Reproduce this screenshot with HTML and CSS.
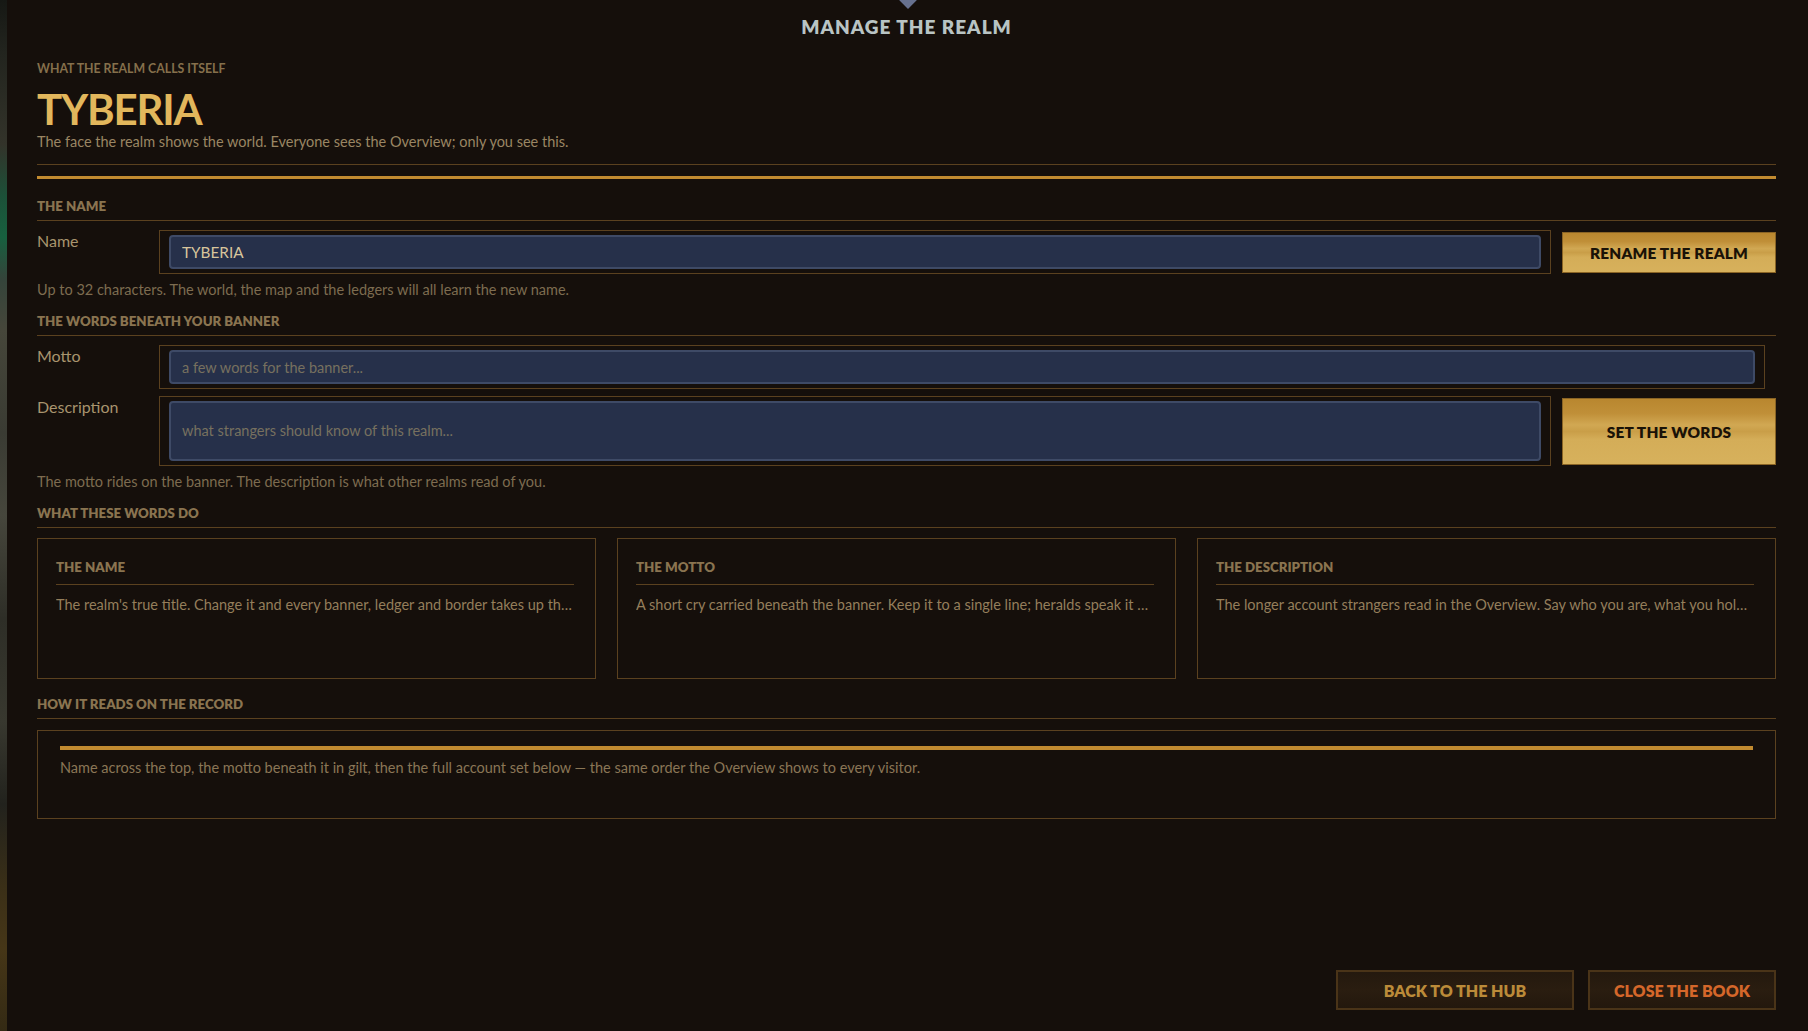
FILE: index.html
```html
<!DOCTYPE html>
<html lang="en">
<head>
<meta charset="utf-8">
<title>Manage the Realm</title>
<link rel="stylesheet" href="styles.css">
</head>
<body>
<div class="backdrop">
  <main class="panel">
    <span class="crest" aria-hidden="true"></span>
    <h1 class="panel-title">MANAGE THE REALM</h1>

    <header class="identity">
      <p class="eyebrow">WHAT THE REALM CALLS ITSELF</p>
      <h2 class="realm-name">TYBERIA</h2>
      <p class="lead">The face the realm shows the world. Everyone sees the Overview; only you see this.</p>
    </header>
    <div class="rule-thin"></div>
    <div class="rule-gilt"></div>

    <section class="block block-name">
      <h3 class="section-head">THE NAME</h3>
      <div class="form-row">
        <label class="field-label" for="realm-name">Name</label>
        <div class="field-frame">
          <input class="field-input" id="realm-name" type="text" value="TYBERIA">
        </div>
        <button class="btn-gilt" type="button">RENAME THE REALM</button>
      </div>
      <p class="hint">Up to 32 characters. The world, the map and the ledgers will all learn the new name.</p>
    </section>

    <section class="block">
      <h3 class="section-head">THE WORDS BENEATH YOUR BANNER</h3>
      <div class="form-row">
        <label class="field-label" for="realm-motto">Motto</label>
        <div class="field-frame field-frame-wide">
          <input class="field-input" id="realm-motto" type="text" placeholder="a few words for the banner...">
        </div>
      </div>
      <div class="form-row form-row-tall">
        <label class="field-label" for="realm-desc">Description</label>
        <div class="field-frame">
          <textarea class="field-input field-area" id="realm-desc" rows="1" placeholder="what strangers should know of this realm..."></textarea>
        </div>
        <button class="btn-gilt" type="button">SET THE WORDS</button>
      </div>
      <p class="hint">The motto rides on the banner. The description is what other realms read of you.</p>
    </section>

    <section class="block">
      <h3 class="section-head">WHAT THESE WORDS DO</h3>
      <div class="cards">
        <article class="card">
          <h4 class="card-head">THE NAME</h4>
          <p class="card-text">The realm's true title. Change it and every banner, ledger and border takes up the new name at once.</p>
        </article>
        <article class="card">
          <h4 class="card-head">THE MOTTO</h4>
          <p class="card-text">A short cry carried beneath the banner. Keep it to a single line; heralds speak it aloud.</p>
        </article>
        <article class="card">
          <h4 class="card-head">THE DESCRIPTION</h4>
          <p class="card-text">The longer account strangers read in the Overview. Say who you are, what you hold, and what you want.</p>
        </article>
      </div>
    </section>

    <section class="block">
      <h3 class="section-head">HOW IT READS ON THE RECORD</h3>
      <div class="record">
        <div class="record-bar"></div>
        <p class="record-text">Name across the top, the motto beneath it in gilt, then the full account set below — the same order the Overview shows to every visitor.</p>
      </div>
    </section>

    <footer class="actions">
      <button class="btn-dark btn-hub" type="button">BACK TO THE HUB</button>
      <button class="btn-dark btn-close" type="button">CLOSE THE BOOK</button>
    </footer>
  </main>
</div>
</body>
</html>
```

FILE: styles.css
```css
* { box-sizing: border-box; }

html, body {
  margin: 0;
  height: 100%;
}

body {
  font-family: "Lato", "Noto Sans", sans-serif;
  background: #140e0a;
  color: #9a8560;
  overflow: hidden;
}

.backdrop {
  height: 100vh;
  background:
    linear-gradient(180deg,
      #161814 0%, #22241e 5%, #33332a 14%,
      #1c5038 19%, #17603f 23%, #34443a 27%,
      #46463a 32%, #3a3b33 42%, #46463c 50%,
      #2e2e27 60%, #38382f 70%, #22221d 78%,
      #3a2f17 86%, #463617 92%, #342a14 100%);
  padding-left: 7px;
}

.panel {
  position: relative;
  height: 100%;
  background: #150f0b;
  padding: 0 32px 21px 30px;
  display: flex;
  flex-direction: column;
}

.crest {
  position: absolute;
  top: -8px;
  left: 50%;
  width: 14px;
  height: 14px;
  margin-left: -7px;
  background: #67718f;
  transform: rotate(45deg);
}

.panel-title {
  margin: 15px 0 0;
  text-align: center;
  font-size: 19px;
  line-height: 24px;
  font-weight: 800;
  letter-spacing: 1px;
  color: #b9c4c4;
}

.identity {
  margin-top: 22px;
}

.eyebrow {
  margin: 0;
  font-size: 12.3px;
  line-height: 16px;
  font-weight: 700;
  color: #85704c;
}

.realm-name {
  margin: 10px 0 0;
  font-size: 42px;
  line-height: 44px;
  font-weight: 700;
  letter-spacing: -1.2px;
  color: #e2b75c;
}

.lead {
  margin: 1px 0 0;
  font-size: 14.5px;
  line-height: 20px;
  color: #9a8663;
}

.rule-thin {
  margin-top: 12px;
  height: 1px;
  background: #5b411f;
}

.rule-gilt {
  margin-top: 11px;
  height: 3px;
  background: #c28b30;
}

.block {
  margin-top: 19px;
}

.block + .block {
  margin-top: 14px;
}

.section-head {
  margin: 0;
  padding-bottom: 6px;
  border-bottom: 1px solid #5b411f;
  font-size: 13.25px;
  line-height: 16px;
  font-weight: 800;
  color: #8a7450;
}

.form-row {
  display: flex;
  align-items: flex-start;
  gap: 11px;
  margin-top: 9px;
}

.form-row-tall {
  margin-top: 7px;
}

.field-label {
  width: 111px;
  flex: none;
  padding-top: 1px;
  font-size: 16px;
  line-height: 20px;
  color: #a8946e;
}

.field-frame {
  flex: 1;
  border: 1px solid #5b411f;
  padding: 4px 9px;
}

.field-frame-wide {
  margin-right: 11px;
}

.field-input {
  display: block;
  width: 100%;
  height: 34px;
  margin: 0;
  padding: 0 11px;
  border: 2px solid #3e4a66;
  border-radius: 4px;
  background: #26304a;
  font-family: "Lato", "Noto Sans", sans-serif;
  font-size: 15.3px;
  color: #d8c59c;
  outline: none;
}

.field-input::placeholder {
  color: #77705f;
  font-size: 14.5px;
}

.field-area {
  height: 60px;
  padding-top: 18px;
  resize: none;
  overflow: hidden;
  line-height: 20px;
}

.btn-gilt {
  flex: none;
  width: 214px;
  align-self: stretch;
  margin: 2px 0 1px;
  border: 1px solid #8a6425;
  background: linear-gradient(180deg,
    #b9872f 0%, #c08f38 22%, #d1a853 40%, #c99e48 50%,
    #d4ad58 62%, #d7b15c 100%);
  font-family: "Lato", "Noto Sans", sans-serif;
  font-size: 15.4px;
  font-weight: 800;
  color: #1a1207;
  letter-spacing: 0.2px;
  cursor: pointer;
}

.hint {
  margin: 6px 0 0;
  font-size: 14.5px;
  line-height: 19px;
  color: #7d6c50;
}

.cards {
  display: grid;
  grid-template-columns: 559px 559px minmax(0, 1fr);
  gap: 21px;
  margin: 10px 0 3px;
}

.card {
  min-width: 0;
  height: 141px;
  border: 1px solid #5b411f;
  padding: 20px 21px 0 18px;
}

.card-head {
  margin: 0;
  padding-bottom: 9px;
  border-bottom: 1px solid #5b411f;
  font-size: 13.25px;
  line-height: 16px;
  font-weight: 800;
  color: #8a7450;
}

.card-text {
  margin: 10px 0 0;
  font-size: 14.5px;
  line-height: 19px;
  color: #947e5b;
  white-space: nowrap;
  overflow: hidden;
  text-overflow: ellipsis;
}

.record {
  margin-top: 11px;
  height: 89px;
  border: 1px solid #5b411f;
  padding: 15px 22px 0;
}

.record-bar {
  height: 4px;
  background: #c28b30;
}

.record-text {
  margin: 8px 0 0;
  font-size: 14.5px;
  line-height: 19px;
  color: #8a7656;
}

.actions {
  margin-top: auto;
  display: flex;
  justify-content: flex-end;
  gap: 14px;
}

.btn-dark {
  height: 40px;
  border: 2px solid #4a3418;
  background: linear-gradient(180deg, #24190e 0%, #2a1d10 50%, #23180d 100%);
  font-family: "Lato", "Noto Sans", sans-serif;
  font-size: 16px;
  font-weight: 800;
  cursor: pointer;
}

.btn-hub {
  width: 238px;
  color: #bb8b39;
}

.btn-close {
  width: 188px;
  color: #d4672a;
}
```
